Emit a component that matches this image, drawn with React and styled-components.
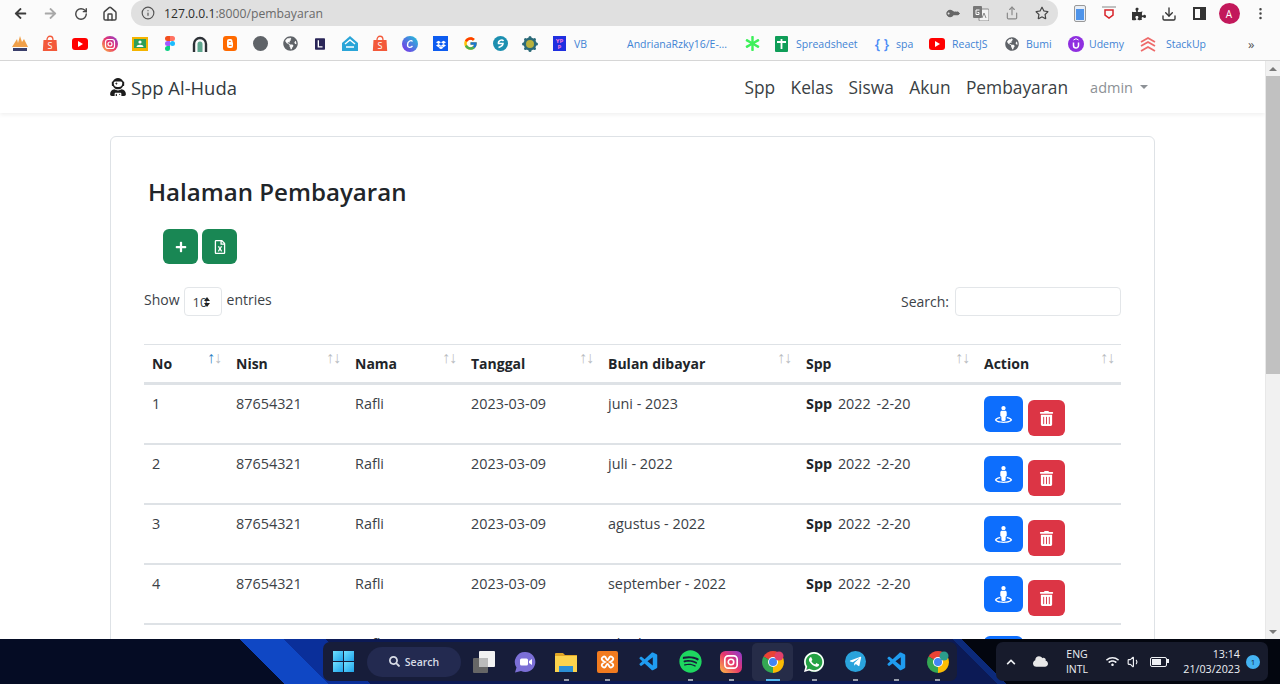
import React from 'react'
import styled, { createGlobalStyle } from 'styled-components'
import {
  FaArrowLeft, FaArrowRight, FaAsterisk, FaChevronUp, FaCloud, FaDropbox, FaGlobeAmericas, FaKey,
  FaPlus, FaPuzzlePiece, FaRegFileExcel, FaRegStar, FaSearch, FaSpotify, FaStreetView, FaTelegramPlane,
  FaTrashAlt, FaUserAstronaut, FaWhatsapp, FaWifi,
} from 'react-icons/fa'
import { FcGoogle } from 'react-icons/fc'
import { VscVscode } from 'react-icons/vsc'
import { Download, Home, Info, MoreVertical, RotateCw, Share, Volume1 } from 'lucide-react'

const GlobalStyle = createGlobalStyle`
  html, body { margin: 0; height: 100%; overflow: hidden; }
  body { font-family: "Open Sans", "Liberation Sans", sans-serif; color: #212529; background: #fff; }
  * { box-sizing: border-box; }
`

const Screen = styled.div`
  width: 1280px;
  height: 684px;
  display: flex;
  flex-direction: column;
  overflow: hidden;
`
const Toolbar = styled.div`
  height: 27px;
  flex: none;
  display: flex;
  align-items: center;
  background: #fbfbfb;
  padding-left: 6px;
  color: #444;
`
const NavIcon = styled.span`
  width: ${p => p.$w || 30}px;
  height: 26px;
  flex: none;
  display: flex;
  align-items: center;
  justify-content: center;
  color: #454545;
`
const KeyIcon = styled(FaKey)`
  transform: rotate(-135deg);
`
const Omnibox = styled.div`
  width: 927px;
  height: 26px;
  margin: 0 7px 1px 7px;
  flex: none;
  display: flex;
  align-items: center;
  padding: 0 4px 0 10px;
  border-radius: 13px;
  background: #e0e0e0;
`
const Url = styled.span`
  margin-left: 9px;
  flex: 1;
  font-size: 12.2px;
  color: #6a6a6a;
  b { font-weight: 400; color: #2c2c2c; }
`
const Avatar = styled.span`
  width: 21px;
  height: 21px;
  border-radius: 50%;
  background: #c2185b;
  color: #fff;
  font-size: 10px;
  display: flex;
  align-items: center;
  justify-content: center;
`
const PanelGlyph = styled.span`
  width: 13px;
  height: 13px;
  border: 2px solid #333;
  border-right-width: 6px;
`
const Bookmarks = styled.div`
  height: 34px;
  flex: none;
  display: flex;
  align-items: center;
  padding-left: 5px;
  background: #fbfbfb;
  border-bottom: 1px solid #d6d6d6;
`
const Bookmark = styled.div`
  width: ${p => p.$w || 30}px;
  flex: none;
  display: flex;
  align-items: center;
  justify-content: ${p => p.$center ? 'center' : 'flex-start'};
  padding-left: ${p => p.$pad ?? 0}px;
  gap: ${p => p.$gap || 6}px;
  font-size: 10.5px;
  color: #3f83d4;
  white-space: nowrap;
`
const Overflow = styled.span`
  color: #555;
  font-size: 13px;
`
const Brace = styled.span`
  font-size: 14px;
  color: #4c8df6;
  font-weight: 600;
  width: 16px;
  text-align: center;
`
const Viewport = styled.div`
  flex: 1;
  min-height: 0;
  display: flex;
  overflow: hidden;
`
const Page = styled.div`
  flex: 1;
  min-width: 0;
`
const Navbar = styled.nav`
  height: 52px;
  display: flex;
  align-items: center;
  padding: 0 117px 0 109px;
  box-shadow: 0 2px 4px rgba(0, 0, 0, 0.06);
`
const Brand = styled.div`
  display: flex;
  align-items: center;
  gap: 4px;
  font-size: 18.4px;
  color: #333a40;
  margin-right: auto;
`
const NavLink = styled.a`
  font-size: 17.35px;
  color: #3a3f44;
  margin-left: 15.4px;
`
const UserMenu = styled.div`
  display: flex;
  align-items: center;
  gap: 7px;
  margin-left: 22px;
  font-size: 14.5px;
  color: #8d9196;
  &::after {
    content: "";
    border-top: 4px solid #8d9196;
    border-left: 4px solid transparent;
    border-right: 4px solid transparent;
  }
`
const Card = styled.section`
  margin: 23px 110px 0;
  padding: 33px 33px 0;
  border: 1px solid #dee2e6;
  border-radius: 6px;
`
const Heading = styled.h1`
  margin: 6px 0 21px 4px;
  font-size: 24.1px;
  line-height: 32px;
  font-weight: 600;
  color: #212529;
`
const Actions = styled.div`
  display: flex;
  gap: 4px;
  margin-left: 19px;
`
const IconButton = styled.button`
  width: ${p => p.$w || 35}px;
  height: ${p => p.$h || 36}px;
  padding: 0;
  margin-top: ${p => p.$top || 0}px;
  border: none;
  border-radius: 6px;
  color: #fff;
  background: ${p => p.$bg};
  display: flex;
  align-items: center;
  justify-content: center;
  font-size: 14px;
  flex: none;
`
const Controls = styled.div`
  display: flex;
  justify-content: space-between;
  align-items: center;
  margin: 23px 0 28px;
  font-size: 14px;
  color: #3c4247;
`
const Length = styled.div`
  display: flex;
  align-items: flex-start;
  gap: 5px;
  line-height: 26px;
  height: 29px;
`
const LengthSelect = styled.div`
  position: relative;
  width: 38px;
  height: 29px;
  margin: 0 0 0 -1px;
  padding-left: 8px;
  border: 1px solid #e3e6e9;
  border-radius: 4px;
  font-size: 13px;
  line-height: 29px;
  &::after {
    content: "";
    position: absolute;
    left: 19px;
    top: 9px;
    border-left: 3px solid transparent;
    border-right: 3px solid transparent;
    border-bottom: 4px solid #222;
  }
  &::before {
    content: "";
    position: absolute;
    left: 19px;
    top: 15px;
    border-left: 3px solid transparent;
    border-right: 3px solid transparent;
    border-top: 4px solid #222;
  }
`
const SearchBox = styled.label`
  display: flex;
  align-items: center;
  gap: 6px;
`
const SearchInput = styled.input`
  width: 166px;
  height: 29px;
  border: 1px solid #e3e6e9;
  border-radius: 4px;
  background: #fff;
`
const Table = styled.table`
  width: 977px;
  table-layout: fixed;
  border-collapse: collapse;
  font-size: 14.4px;
`
const Th = styled.th`
  position: relative;
  height: 39px;
  padding: 0 8px 1px;
  text-align: left;
  font-size: 14px;
  font-weight: 700;
  vertical-align: middle;
  color: #212529;
  border-top: 1px solid #dee2e6;
  border-bottom: 3px solid #dee2e6;
`
const SortArrows = styled.span`
  position: absolute;
  top: 3px;
  right: 7px;
  display: flex;
  font-size: 16px;
  letter-spacing: -1px;
  font-weight: 400;
  line-height: 18px;
  color: #b9bdc1;
`
const Arrow = styled.span`
  color: ${p => p.$on ? '#2f7fc4' : 'inherit'};
`
const Row = styled.tr`
  height: 60px;
`
const Td = styled.td`
  padding: 9px 8px 7px;
  vertical-align: top;
  color: #3b4146;
  line-height: 20px;
  border-bottom: 2px solid #dee2e6;
  b { color: #212529; }
`
const SppCell = styled(Td)`
  word-spacing: 2px;
`
const ActionCell = styled.div`
  display: flex;
  gap: 5px;
  margin-top: 2px;
`
const Scrollbar = styled.div`
  width: 15px;
  flex: none;
  display: flex;
  flex-direction: column;
  align-items: center;
  background: #f1f1f1;
  border-left: 1px solid #e8e8e8;
`
const ScrollCaret = styled.span`
  margin: ${p => p.$up ? '6px 0 5px' : 'auto 0 5px'};
  border-left: 4px solid transparent;
  border-right: 4px solid transparent;
  border-${p => p.$up ? 'bottom' : 'top'}: 4px solid #7a7a7a;
`
const Thumb = styled.div`
  width: 100%;
  height: 298px;
  background: #c1c1c1;
`
const Taskbar = styled.footer`
  height: 45px;
  flex: none;
  display: flex;
  align-items: center;
  padding-left: 323px;
  background: linear-gradient(45deg, #050c24 0 201px, #0f47c4 201px 232px, #0a2f9a 232px 262px, #0c1a55 262px 705px, #0c2a7a 705px 712px, #03060f 712px);
`
const TaskPill = styled.div`
  width: 634px;
  height: 39px;
  flex: none;
  display: flex;
  align-items: center;
  padding-left: 9px;
  border-radius: 7px;
  background: #171d3a;
`
const TaskItem = styled.span`
  position: relative;
  width: ${p => p.$w || 41.3}px;
  height: 38px;
  margin-left: ${p => p.$ml || 0}px;
  flex: none;
  display: flex;
  align-items: center;
  justify-content: center;
  border-radius: 5px;
  background: ${p => p.$active ? '#262c48' : 'transparent'};
  &::after {
    content: "";
    display: ${p => p.$dot ? 'block' : 'none'};
    position: absolute;
    bottom: 0;
    left: 50%;
    width: ${p => p.$active ? 14 : 5}px;
    height: 2px;
    margin-left: ${p => p.$active ? -7 : -2.5}px;
    background: ${p => p.$active ? '#54b9f0' : '#9aa0ad'};
  }
`
const TaskSearch = styled.div`
  width: 94px;
  height: 30px;
  margin-left: 13px;
  flex: none;
  display: flex;
  align-items: center;
  justify-content: center;
  gap: 5px;
  border-radius: 15px;
  background: #232a50;
  color: #d8dce6;
  font-size: 10.5px;
  font-weight: 600;
`
const StartGrid = styled.span`
  width: 21px;
  height: 21px;
  display: grid;
  grid-template-columns: 1fr 1fr;
  gap: 1px;
  i { background: linear-gradient(135deg, #6fe0ff, #1fa3ea); }
`
const AppCircle = styled.span`
  width: ${p => p.$size}px;
  height: ${p => p.$size}px;
  display: flex;
  align-items: center;
  justify-content: center;
  border-radius: 50%;
  background: ${p => p.$bg};
`
const Tray = styled.div`
  width: 272px;
  height: 39px;
  margin-left: 39px;
  flex: none;
  display: flex;
  align-items: center;
  padding-left: 2px;
  border-radius: 7px;
  background: #171b2c;
  color: #eef0f4;
`
const TraySlot = styled.span`
  width: ${p => p.$w}px;
  flex: none;
  display: flex;
  align-items: center;
  justify-content: center;
`
const Lang = styled.div`
  width: 42px;
  flex: none;
  text-align: center;
  font-size: 10.5px;
  line-height: 15px;
`
const Clock = styled.div`
  width: 66px;
  flex: none;
  text-align: right;
  font-size: 10.7px;
  line-height: 15px;
`
const Badge = styled.span`
  width: 14px;
  height: 14px;
  margin-left: 6px;
  flex: none;
  border-radius: 50%;
  background: #44b3f2;
  color: #123;
  font-size: 8px;
  display: flex;
  align-items: center;
  justify-content: center;
`
const Battery = styled.span`
  position: relative;
  width: 17px;
  height: 10px;
  border: 1.5px solid #eef0f4;
  border-radius: 2px;
  padding: 1px;
  &::before {
    content: "";
    display: block;
    width: 9px;
    height: 100%;
    background: #eef0f4;
  }
  &::after {
    content: "";
    position: absolute;
    right: -3.5px;
    top: 1.5px;
    width: 2px;
    height: 4px;
    background: #eef0f4;
  }
`

const Shopee = () => (
  <svg width="16" height="17" viewBox="0 0 16 17">
    <path d="M1.5 5h13l.7 11H.8z" fill="#f3593a" />
    <path d="M5 5c0-5 6-5 6 0" fill="none" stroke="#f3593a" strokeWidth="1.3" />
    <text x="8" y="14" textAnchor="middle" fontSize="9" fill="#fff">S</text>
  </svg>
)
const Youtube = () => (
  <svg width="16" height="12" viewBox="0 0 16 12">
    <rect width="16" height="12" rx="3" fill="#f00" />
    <path d="M6 3l5 3-5 3z" fill="#fff" />
  </svg>
)
const Insta = ({ size = 16 }) => (
  <svg width={size} height={size} viewBox="0 0 16 16">
    <defs>
      <linearGradient id="ig" x1="0" y1="1" x2="1" y2="0">
        <stop offset="0" stopColor="#fdc043" />
        <stop offset="0.5" stopColor="#e8356b" />
        <stop offset="1" stopColor="#8a3bd6" />
      </linearGradient>
    </defs>
    <rect width="16" height="16" rx={size > 16 ? 4 : 8} fill="url(#ig)" />
    <rect x="3.5" y="3.5" width="9" height="9" rx="2.5" fill="none" stroke="#fff" strokeWidth="1.2" />
    <circle cx="8" cy="8" r="2" fill="none" stroke="#fff" strokeWidth="1.2" />
  </svg>
)
const Classroom = () => (
  <svg width="16" height="14" viewBox="0 0 16 14">
    <rect width="16" height="14" fill="#f4b400" />
    <rect x="2" y="2" width="12" height="9" fill="#2f9e58" />
    <circle cx="8" cy="5" r="1.6" fill="#fff" />
    <path d="M4.5 10c0-3 7-3 7 0z" fill="#fff" />
  </svg>
)
const Figma = () => (
  <svg width="10" height="15" viewBox="0 0 10 15">
    <path d="M5 0H2.5a2.5 2.5 0 000 5H5z" fill="#f24e1e" />
    <path d="M5 0h2.5a2.5 2.5 0 010 5H5z" fill="#ff7262" />
    <path d="M5 5H2.5a2.5 2.5 0 000 5H5z" fill="#a259ff" />
    <circle cx="7.5" cy="7.5" r="2.5" fill="#1abcfe" />
    <path d="M5 10H2.5A2.5 2.5 0 105 12.5z" fill="#0acf83" />
  </svg>
)
const Arch = () => (
  <svg width="16" height="16" viewBox="0 0 16 16">
    <path d="M2 16V8a6 6 0 0112 0v8" fill="none" stroke="#2c3136" strokeWidth="2.4" />
    <path d="M5.5 16V8a2.5 2.5 0 015 0v8z" fill="#5da58d" />
  </svg>
)
const Blogger = () => (
  <svg width="14" height="15" viewBox="0 0 14 15">
    <rect width="14" height="15" rx="3" fill="#ff6a00" />
    <path d="M4 5a2 2 0 012-2h1.5a2 2 0 012 2v1.5h.5V10a2 2 0 01-2 2H6a2 2 0 01-2-2z" fill="#fff" />
    <path d="M5.8 5.4h2M5.8 9.4h2.8" stroke="#ff6a00" strokeWidth="1" />
  </svg>
)
const Dot = () => (
  <svg width="15" height="15"><circle cx="7.5" cy="7.5" r="7.5" fill="#5f6368" /></svg>
)
const Linear = () => (
  <svg width="10" height="12" viewBox="0 0 12 14">
    <rect width="12" height="14" rx="1" fill="#2a2658" />
    <path d="M4 2.5v8h5" fill="none" stroke="#fff" strokeWidth="1.6" />
  </svg>
)
const HouseMark = () => (
  <svg width="16" height="15" viewBox="0 0 16 15">
    <path d="M8 0l8 7v8H0V7z" fill="#2aa5d8" />
    <path d="M3 8l5-4 5 4M4 11h8" fill="none" stroke="#fff" strokeWidth="1.4" />
  </svg>
)
const Canva = () => (
  <svg width="16" height="16" viewBox="0 0 16 16">
    <defs>
      <linearGradient id="cv" x1="0" y1="1" x2="1" y2="0">
        <stop offset="0" stopColor="#7d2ae8" />
        <stop offset="1" stopColor="#1fc8d8" />
      </linearGradient>
    </defs>
    <circle cx="8" cy="8" r="8" fill="url(#cv)" />
    <path d="M10.5 5.5C9.5 3.5 5.5 5 5.5 9c0 3 3 3 5 1" fill="none" stroke="#fff" strokeWidth="1.4" />
  </svg>
)
const DropboxMark = () => (
  <svg width="15" height="15" viewBox="0 0 15 15">
    <rect width="15" height="15" fill="#0d5cf0" />
    <foreignObject x="2.5" y="2.5" width="10" height="10"><FaDropbox size={10} color="#fff" /></foreignObject>
  </svg>
)
const EdgeMark = () => (
  <svg width="15" height="15" viewBox="0 0 15 15">
    <circle cx="7.5" cy="7.5" r="7.5" fill="#1c8fb0" />
    <path d="M10.5 5C9 3 5 4.500 5.500 7.500H10C10 10 7 11 5.500 11.500" fill="none" stroke="#fff" strokeWidth="1.6" />
  </svg>
)
const GearMark = () => (
  <svg width="16" height="16" viewBox="0 0 16 16">
    <g fill="#2b6a78">
      <circle cx="8" cy="8" r="6.500" />
      <circle cx="8" cy="1.500" r="1.500" /><circle cx="8" cy="14.500" r="1.500" />
      <circle cx="1.500" cy="8" r="1.500" /><circle cx="14.500" cy="8" r="1.500" />
      <circle cx="3.500" cy="3.500" r="1.500" /><circle cx="12.500" cy="3.500" r="1.500" />
      <circle cx="3.500" cy="12.500" r="1.500" /><circle cx="12.500" cy="12.500" r="1.500" />
    </g>
    <circle cx="8" cy="8" r="4" fill="#b9b13c" />
  </svg>
)
const YpMark = () => (
  <svg width="13" height="15" viewBox="0 0 13 15">
    <rect width="13" height="15" fill="#1f2fe0" />
    <text x="6.500" y="7" textAnchor="middle" fontSize="6" fontWeight="700" fill="#f37bd8">YP</text>
    <text x="6.500" y="13" textAnchor="middle" fontSize="6" fontWeight="700" fill="#f37bd8">P</text>
  </svg>
)
const Sheet = () => (
  <svg width="13" height="16" viewBox="0 0 13 16">
    <rect width="13" height="16" rx="1" fill="#0f9d58" />
    <path d="M2 6h9M6.500 3v10" stroke="#fff" strokeWidth="1.800" />
  </svg>
)
const Udemy = () => (
  <svg width="16" height="16" viewBox="0 0 16 16">
    <circle cx="8" cy="8" r="8" fill="#8f2fe0" />
    <path d="M5.500 6.500V9.500a2.500 2.500 0 005 0V6.500" fill="none" stroke="#fff" strokeWidth="1.500" />
    <path d="M5.500 4l2.500-1.300L10.500 4" fill="none" stroke="#fff" strokeWidth="1" />
  </svg>
)
const Stackup = () => (
  <svg width="16" height="16" viewBox="0 0 16 16" fill="none" stroke="#ee6a6a" strokeWidth="1.800">
    <path d="M1 6l7-4 7 4M1 10l7-4 7 4M1 15l7-4 7 4" />
  </svg>
)
const Pma = () => (
  <svg width="18" height="16" viewBox="0 0 18 16">
    <path d="M1 11L6 3l1 4 2-7 2 6 2-3 4 8z" fill="#f0a04a" />
    <rect x="2" y="12" width="14" height="3" fill="#3a3f6b" />
  </svg>
)
const Translate = () => (
  <svg width="16" height="15" viewBox="0 0 16 15">
    <rect x="6" y="3" width="10" height="12" rx="1" fill="#f4f4f4" stroke="#888" />
    <rect width="9" height="12" rx="1" fill="#777" />
    <path d="M6.500 4H3v4.500h3V6.500H4.500" fill="none" stroke="#fff" />
    <path d="M9 12l2-5 2 5" fill="none" stroke="#888" />
  </svg>
)
const PhoneMark = () => (
  <svg width="12" height="17" viewBox="0 0 12 17">
    <rect x="0.500" y="0.500" width="11" height="16" rx="1.500" fill="#e8eef6" stroke="#999" />
    <rect x="2" y="4" width="8" height="11" fill="#4f94ea" />
  </svg>
)
const HstsMark = () => (
  <svg width="14" height="15" viewBox="0 0 14 15">
    <path d="M0 1h14" stroke="#999" strokeWidth="1.200" />
    <path d="M3 4h8v5l-4 3-4-3z" fill="none" stroke="#d8232a" strokeWidth="1.500" />
  </svg>
)
const Chrome = ({ accent }) => (
  <svg width="22" height="22" viewBox="0 0 22 22">
    <path d="M11 11L1.500 5.500A11 11 0 0120.500 5.500z" fill="#ea4335" />
    <path d="M11 11L20.500 5.500A11 11 0 0111 22z" fill="#fbbc04" />
    <path d="M11 11V22A11 11 0 011.500 5.500z" fill="#34a853" />
    <circle cx="11" cy="11" r="5" fill="#fff" />
    <circle cx="11" cy="11" r="4" fill="#4285f4" />
    <circle cx="17" cy="5" r="4.500" fill={accent} />
  </svg>
)
const TaskView = () => (
  <svg width="22" height="22" viewBox="0 0 22 22">
    <rect x="0" y="7" width="15" height="15" rx="1" fill="#666" />
    <rect x="6" y="0" width="16" height="16" rx="1" fill="#f2f2f2" />
    <rect x="6" y="7" width="9" height="9" fill="#bbb" />
  </svg>
)
const Meet = () => (
  <svg width="22" height="22" viewBox="0 0 22 22">
    <path d="M11 1a10 10 0 11-4 19l-6 1.500 1.500-5A10 10 0 0111 1z" fill="#7b6fd6" />
    <rect x="6" y="7.500" width="8" height="7" rx="1.500" fill="#fff" />
    <path d="M15 10l3-2v6l-3-2z" fill="#fff" />
  </svg>
)
const Folder = () => (
  <svg width="22" height="20" viewBox="0 0 22 20">
    <path d="M0 2a1 1 0 011-1h7l2 2h12v3H0z" fill="#e0a526" />
    <rect y="4" width="22" height="16" fill="#fcd34d" />
    <rect x="4" y="14" width="14" height="6" fill="#2b8fd6" />
  </svg>
)
const Xampp = () => (
  <svg width="21" height="22" viewBox="0 0 21 22">
    <rect width="21" height="22" rx="2" fill="#f27b1f" />
    <path d="M6 6c3-2 3 3 4.500 3S12 4 15 6s0 4-2 5c2 1 5 3 2 5s-3-3-4.500-3S9 18 6 16s0-4 2-5C6 10 3 8 6 6z" fill="none" stroke="#fff" strokeWidth="1.800" />
  </svg>
)

const bookmarks = [
  <Pma />, <Shopee />, <Youtube />, <Insta />, <Classroom />, <Figma />, <Arch />, <Blogger />, <Dot />,
  <FaGlobeAmericas size={15} color="#5f6368" />, <Linear />, <HouseMark />, <Shopee />, <Canva />, <DropboxMark />,
  <FcGoogle size={15} />, <EdgeMark />, <GearMark />,
]

const columns = [
  { title: 'No', width: 84 },
  { title: 'Nisn', width: 119 },
  { title: 'Nama', width: 116 },
  { title: 'Tanggal', width: 137 },
  { title: 'Bulan dibayar', width: 198 },
  { title: 'Spp', width: 178 },
  { title: 'Action', width: 145 },
]
const months = ['juni - 2023', 'juli - 2022', 'agustus - 2022', 'september - 2022', 'oktober - 2022']

export default function App() {
  return (
    <Screen>
      <GlobalStyle />
      <Toolbar>
        <NavIcon $w={28}><FaArrowLeft size={13} color="#3c3c3c" /></NavIcon>
        <NavIcon $w={32}><FaArrowRight size={13} color="#a8a8a8" /></NavIcon>
        <NavIcon $w={30}><RotateCw size={14} strokeWidth={2.4} /></NavIcon>
        <NavIcon $w={28}><Home size={16} strokeWidth={2.2} /></NavIcon>
        <Omnibox>
          <Info size={14} color="#555" />
          <Url><b>127.0.0.1</b>:8000/pembayaran</Url>
          <NavIcon $w={32}><KeyIcon size={11} color="#666" /></NavIcon>
          <NavIcon $w={26}><Translate /></NavIcon>
          <NavIcon $w={36}><Share size={14} color="#888" /></NavIcon>
          <NavIcon $w={24}><FaRegStar size={14} color="#444" /></NavIcon>
        </Omnibox>
        <NavIcon $w={30}><PhoneMark /></NavIcon>
        <NavIcon $w={27}><HstsMark /></NavIcon>
        <NavIcon $w={34}><FaPuzzlePiece size={14} color="#333" /></NavIcon>
        <NavIcon $w={26}><Download size={16} color="#333" /></NavIcon>
        <NavIcon $w={34}><PanelGlyph /></NavIcon>
        <NavIcon $w={26}><Avatar>A</Avatar></NavIcon>
        <NavIcon $w={36}><MoreVertical size={15} color="#444" /></NavIcon>
      </Toolbar>
      <Bookmarks>
        {bookmarks.map((icon, i) => (
          <Bookmark key={i} $center>{icon}</Bookmark>
        ))}
        <Bookmark $w={67} $pad={8} $gap={8}><YpMark />VB</Bookmark>
        <Bookmark $w={131} $pad={15}>AndrianaRzky16/E-...</Bookmark>
        <Bookmark $w={32} $pad={2}><FaAsterisk size={15} color="#3df05a" /></Bookmark>
        <Bookmark $w={99} $gap={8}><Sheet />Spreadsheet</Bookmark>
        <Bookmark $w={55}><Brace>{'{ }'}</Brace>spa</Bookmark>
        <Bookmark $w={76} $gap={7}><Youtube />ReactJS</Bookmark>
        <Bookmark $w={63} $gap={7}><FaGlobeAmericas size={14} color="#5f6368" />Bumi</Bookmark>
        <Bookmark $w={72} $gap={5}><Udemy />Udemy</Bookmark>
        <Bookmark $w={108} $gap={10}><Stackup />StackUp</Bookmark>
        <Bookmark $w={20}><Overflow>»</Overflow></Bookmark>
      </Bookmarks>
      <Viewport>
        <Page>
          <Navbar>
            <Brand><FaUserAstronaut size={18} color="#1c1c1c" />Spp Al-Huda</Brand>
            <NavLink>Spp</NavLink>
            <NavLink>Kelas</NavLink>
            <NavLink>Siswa</NavLink>
            <NavLink>Akun</NavLink>
            <NavLink>Pembayaran</NavLink>
            <UserMenu>admin</UserMenu>
          </Navbar>
          <Card>
            <Heading>Halaman Pembayaran</Heading>
            <Actions>
              <IconButton $bg="#198754" $h={35}><FaPlus size={12} /></IconButton>
              <IconButton $bg="#198754" $h={35}><FaRegFileExcel size={14} /></IconButton>
            </Actions>
            <Controls>
              <Length>Show <LengthSelect>10</LengthSelect> entries</Length>
              <SearchBox>Search: <SearchInput /></SearchBox>
            </Controls>
            <Table>
              <colgroup>
                {columns.map(c => <col key={c.title} width={c.width} />)}
              </colgroup>
              <thead>
                <tr>
                  {columns.map((c, i) => (
                    <Th key={c.title}>
                      {c.title}
                      <SortArrows><Arrow $on={i === 0}>↑</Arrow><Arrow>↓</Arrow></SortArrows>
                    </Th>
                  ))}
                </tr>
              </thead>
              <tbody>
                {months.map((month, i) => (
                  <Row key={month}>
                    <Td>{i + 1}</Td>
                    <Td>87654321</Td>
                    <Td>Rafli</Td>
                    <Td>2023-03-09</Td>
                    <Td>{month}</Td>
                    <SppCell><b>Spp</b> 2022 -2-20</SppCell>
                    <Td>
                      <ActionCell>
                        <IconButton $bg="#0d6efd" $w={39}><FaStreetView size={17} /></IconButton>
                        <IconButton $bg="#dc3545" $w={37} $top={4}><FaTrashAlt size={15} /></IconButton>
                      </ActionCell>
                    </Td>
                  </Row>
                ))}
              </tbody>
            </Table>
          </Card>
        </Page>
        <Scrollbar>
          <ScrollCaret $up />
          <Thumb />
          <ScrollCaret />
        </Scrollbar>
      </Viewport>
      <Taskbar>
        <TaskPill>
          <TaskItem $w={22}><StartGrid><i /><i /><i /><i /></StartGrid></TaskItem>
          <TaskSearch><FaSearch size={11} />Search</TaskSearch>
          <TaskItem $ml={2}><TaskView /></TaskItem>
          <TaskItem><Meet /></TaskItem>
          <TaskItem $dot><Folder /></TaskItem>
          <TaskItem $dot><Xampp /></TaskItem>
          <TaskItem><VscVscode size={22} color="#1f9cf0" /></TaskItem>
          <TaskItem $dot><FaSpotify size={23} color="#1ed760" /></TaskItem>
          <TaskItem $dot><Insta size={22} /></TaskItem>
          <TaskItem $dot $active><Chrome accent="#e0406a" /></TaskItem>
          <TaskItem $dot><AppCircle $size={20} $bg="#25a244"><FaWhatsapp size={24} color="#fff" /></AppCircle></TaskItem>
          <TaskItem $dot><AppCircle $size={21} $bg="#2aa3dc"><FaTelegramPlane size={13} color="#fff" /></AppCircle></TaskItem>
          <TaskItem $dot><VscVscode size={22} color="#1f9cf0" /></TaskItem>
          <TaskItem $dot><Chrome accent="#2c9c8c" /></TaskItem>
        </TaskPill>
        <Tray>
          <TraySlot $w={26}><FaChevronUp size={10} /></TraySlot>
          <TraySlot $w={32}><FaCloud size={15} color="#e8e8e8" /></TraySlot>
          <Lang>ENG<br />INTL</Lang>
          <TraySlot $w={28}><FaWifi size={13} /></TraySlot>
          <TraySlot $w={16}><Volume1 size={14} /></TraySlot>
          <TraySlot $w={32}><Battery /></TraySlot>
          <Clock>13:14<br />21/03/2023</Clock>
          <Badge>1</Badge>
        </Tray>
      </Taskbar>
    </Screen>
  )
}
